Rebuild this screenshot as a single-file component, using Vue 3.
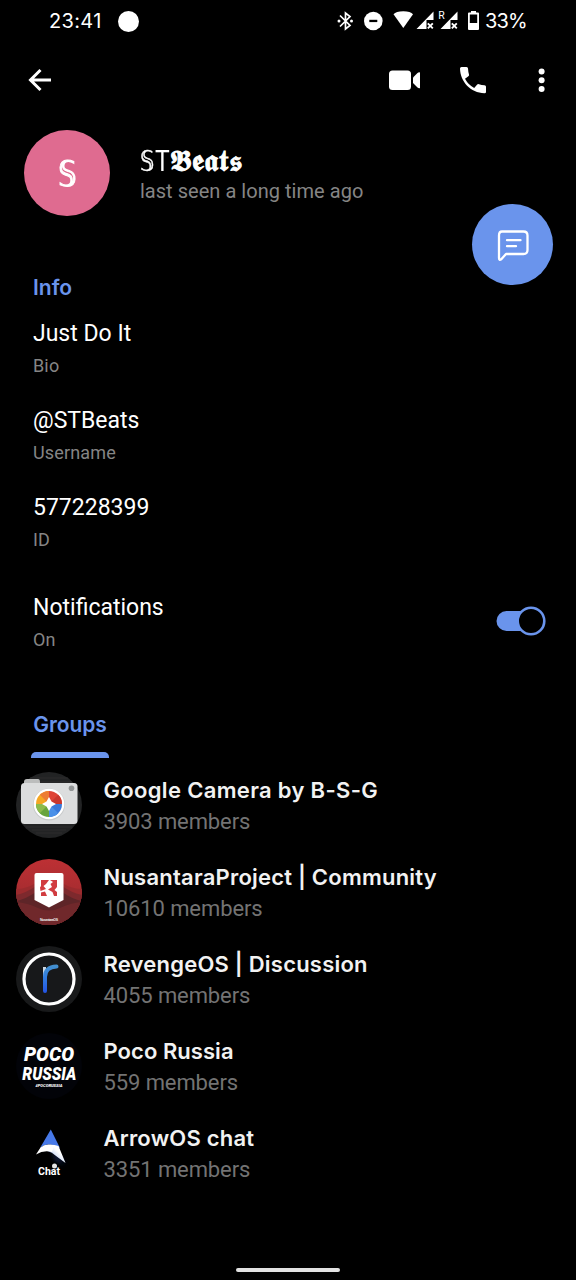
<script setup>
const details = [
  { value: 'Just Do It', label: 'Bio' },
  { value: '@STBeats', label: 'Username' },
  { value: '577228399', label: 'ID' },
]
const groups = [
  { id: 'camera', name: 'Google Camera by B-S-G', members: 3903 },
  { id: 'nusantara', name: 'NusantaraProject | Community', members: 10610 },
  { id: 'revenge', name: 'RevengeOS | Discussion', members: 4055 },
  { id: 'poco', name: 'Poco Russia', members: 559 },
  { id: 'arrow', name: 'ArrowOS chat', members: 3351 },
]
</script>

<template>
  <main class="screen">
    <header class="status">
      <span class="clock">23:41</span>
      <span class="dot"></span>
      <svg class="status-icons" width="146" height="26" viewBox="336 8 146 26" fill="#fff">
        <g fill="none" stroke="#fff" stroke-width="1.7">
          <path d="M340 15.500 350 25.500 345.500 29V13L350 16.500 340 26.500" />
        </g>
        <circle cx="339" cy="21" r="1.5" /><circle cx="351.500" cy="21" r="1.5" />
        <circle cx="373.300" cy="21" r="9.3" />
        <path d="M369.300 19.8h8v2.3h-8z" fill="#000" />
        <path d="M393.500 14.200Q396 11.300 403.300 11.300T413 14.200L403.300 28z" />
        <path d="M433.500 11.500V20H426.500V29H416.500z" />
        <path d="M427.800 23.300l5 5m0-5l-5 5" stroke="#fff" stroke-width="1.900" />
        <path d="M457.500 11.500V20H450.500V29H440.500z" />
        <path d="M451.800 23.300l5 5m0-5l-5 5" stroke="#fff" stroke-width="1.900" />
        <text x="438.300" y="18.600" font-size="10.500" font-family="Roboto, sans-serif">R</text>
        <path fill-rule="evenodd" d="M471 11h5v1.500h2q1 0 1 1V29q0 1-1 1h-9q-1 0-1-1V13.500q0-1 1-1h2zM469.800 14.500V23h7.400V14.500z" />
      </svg>
      <span class="battery">33%</span>
    </header>

    <nav class="toolbar">
      <svg class="back" width="26" height="26" viewBox="0 0 26 26" fill="none" stroke="#fff" stroke-width="3">
        <path d="M13.500 3 3.500 13 13.500 23M3.500 13H24" />
      </svg>
      <svg class="video" width="33" height="24" viewBox="0 0 33 24" fill="#fff">
        <rect x="1" y="2.500" width="22" height="19.500" rx="3.500" />
        <path d="M25 9.500 29.500 5Q31 3.800 32 4.500V20Q31 20.700 29.500 19.500L25 15z" />
      </svg>
      <svg class="phone" width="28" height="28" viewBox="0 0 28 28" fill="#fff">
        <path d="M2.500 1H7.500Q9 1 9 2.500Q9.200 6 10 8.500Q10.300 9.300 9.700 10L6 12.800Q9.200 18.800 15.200 22L18.200 18.500Q19 17.800 20 18.200Q22.500 19 25.500 19.200Q27 19.300 27 20.700V26Q27 27.300 25.500 27.300C11.500 26.700 1.400 16 1 2.500Q1 1 2.500 1Z" />
      </svg>
      <svg class="more" width="8" height="26" viewBox="0 0 8 26" fill="#fff">
        <circle cx="3.600" cy="4.600" r="3" /><circle cx="3.600" cy="13.200" r="3" /><circle cx="3.600" cy="22" r="3" />
      </svg>
    </nav>

    <section class="profile">
      <div class="portrait"><span class="initial">𝕊</span></div>
      <div class="identity">
        <h1><span class="double">𝕊</span><span class="plain">T</span><b>𝕭𝖊𝖆𝖙𝖘</b></h1>
        <p>last seen a long time ago</p>
      </div>
      <button class="message">
        <svg width="34" height="34" viewBox="0 0 34 34" fill="none" stroke="#fff" stroke-width="2.300" stroke-linecap="round" stroke-linejoin="round">
          <path d="M6 3.500H27.500Q31.500 3.500 31.500 7.500V22Q31.500 26 27.500 26H10L5.300 31.200Q3 32.800 3 30V7.500Q3 3.500 6 3.500Z" />
          <path d="M11 12.200H24.500M11 18.200H20" />
        </svg>
      </button>
    </section>

    <section class="info">
      <h2>Info</h2>
      <div v-for="d in details" :key="d.label" class="detail">
        <strong>{{ d.value }}</strong>
        <span>{{ d.label }}</span>
      </div>
    </section>

    <section class="notify">
      <div class="detail">
        <strong>Notifications</strong>
        <span>On</span>
      </div>
      <svg class="switch" width="52" height="30" viewBox="0 0 52 30">
        <rect x="1.500" y="5" width="40" height="20" rx="10" fill="#6a94ec" />
        <circle cx="36" cy="15" r="13.300" fill="#000" stroke="#6a94ec" stroke-width="2.600" />
      </svg>
    </section>

    <section class="groups">
      <div class="tab">Groups</div>
      <div class="indicator"></div>
      <article v-for="g in groups" :key="g.id" class="group">
        <svg class="avatar" width="66" height="66" viewBox="0 0 66 66">
          <template v-if="g.id === 'camera'">
            <circle cx="33" cy="33" r="33" fill="#222324" />
            <path d="M14 6H52M10 10H56M10 55H56M16 58H50M20 61H46" stroke="#303132" stroke-width=".7" />
            <path d="M8 12V10Q8 7 11 7H22Q24 7 24 10V12z" fill="#bcbdbd" />
            <rect x="5" y="11" width="56.500" height="41" rx="3.500" fill="#dcddde" />
            <circle cx="55.500" cy="16.300" r="2.800" fill="#929596" />
            <circle cx="33" cy="32.500" r="16" fill="#c9cbcc" />
            <circle cx="33" cy="32" r="15.300" fill="#fff" />
            <path d="M33 32V19A13 13 0 0 1 46 32Z" fill="#df4336" />
            <path d="M33 32H46A13 13 0 0 1 33 45Z" fill="#3978d8" />
            <path d="M33 32V45A13 13 0 0 1 20 32Z" fill="#68a43d" />
            <path d="M33 32H20A13 13 0 0 1 33 19Z" fill="#f5a623" />
            <path d="M33 32 23.800 22.800A13 13 0 0 1 33 19Z" fill="#ed7c32" />
            <path d="M33 32 42.200 22.800A13 13 0 0 1 46 32Z" fill="#c9372e" />
            <path d="M33 32 42.200 41.200A13 13 0 0 1 33 45Z" fill="#4a90e8" />
            <path d="M33 32 23.800 41.200A13 13 0 0 1 20 32Z" fill="#8dbb4b" />
            <path d="M33 25 35.500 29.500 40 32 35.500 34.500 33 39 30.500 34.500 26 32 30.500 29.500z" fill="#fff" />
          </template>
          <template v-else-if="g.id === 'nusantara'">
            <defs>
              <clipPath id="nus-clip"><circle cx="33" cy="33" r="33" /></clipPath>
              <linearGradient id="nus-sky" x2="0" y2="1"><stop stop-color="#bd3034" /><stop offset="1" stop-color="#93292c" /></linearGradient>
            </defs>
            <g clip-path="url(#nus-clip)">
              <rect width="66" height="66" fill="url(#nus-sky)" />
              <path d="M0 30Q10 30 20 24H46Q56 30 66 30V66H0z" fill="#9b2b2e" />
              <path d="M0 36Q10 34 20 27H46Q56 34 66 36V66H0z" fill="#7d292d" />
              <path d="M0 42Q10 40 20 33H46Q56 40 66 42V66H0z" fill="#5e2528" />
              <path d="M0 43Q12 44 22 49Q33 54 44 49Q54 44 66 43V66H0z" fill="#70282b" />
            </g>
            <path d="M20.500 14H45.500Q47.500 14 47.500 16V41L33 48.500 18.500 41V16Q18.500 14 20.500 14z" fill="#fff" />
            <path d="M25 21H33L30 25 27.500 27 30 30 24.500 32 24 28.500 25 27zM25 33.500 29 32.500 31 37H25zM34 21H41V28L38.500 31 41 33V37H38L36.500 33 32 30.500 36 28 34.500 25 37 23z" fill="#d13c40" />
            <text x="33" y="61.500" text-anchor="middle" font-size="3.500" font-weight="700" fill="#eee" textLength="18" font-family="Liberation Sans, sans-serif">NusantaraOS</text>
          </template>
          <template v-else-if="g.id === 'revenge'">
            <defs><linearGradient id="r-ink" gradientUnits="userSpaceOnUse" x1="33" y1="20" x2="33" y2="47"><stop stop-color="#438fce" /><stop offset=".4" stop-color="#327ee0" /><stop offset="1" stop-color="#2454e5" /></linearGradient></defs>
            <circle cx="33" cy="33" r="33" fill="#18191a" />
            <circle cx="33" cy="33" r="25" fill="#17181a" stroke="#fff" stroke-width="3.200" />
            <path d="M28.500 21V33" fill="none" stroke="#cbd6e2" stroke-width="3" />
            <path d="M29 45V31Q29 21 40.500 20.500" fill="none" stroke="url(#r-ink)" stroke-width="4" stroke-linecap="round" />
          </template>
          <template v-else-if="g.id === 'poco'">
            <circle cx="33" cy="33" r="33" fill="#020308" />
            <g fill="#fff" text-anchor="middle" font-weight="900" font-style="italic" font-family="Roboto, sans-serif">
              <text x="33" y="28" font-size="20.500" textLength="50" lengthAdjust="spacingAndGlyphs">POCO</text>
              <text x="33.300" y="47" font-size="17.500" textLength="54" lengthAdjust="spacingAndGlyphs">RUSSIA</text>
              <text x="33" y="54" font-size="4" textLength="27" lengthAdjust="spacingAndGlyphs">#POCORUSSIA</text>
            </g>
          </template>
          <template v-else>
            <defs>
              <filter id="arrow-glow" x="-50%" y="-50%" width="200%" height="200%"><feGaussianBlur stdDeviation="2.500" /></filter>
              <linearGradient id="arrow-wing" gradientUnits="userSpaceOnUse" x1="36" y1="37" x2="42" y2="31"><stop stop-color="#15295d" /><stop offset=".45" stop-color="#dce6fa" /><stop offset="1" stop-color="#fff" /></linearGradient>
            </defs>
            <path d="M36 31 49 44 40 40z" fill="#1d3474" filter="url(#arrow-glow)" />
            <path d="M34.800 9.500 24 28Q32 21 44 28z" fill="#4779e8" />
            <path d="M24.500 28Q32 22.500 42.500 26L49.500 43 36 33z" fill="url(#arrow-wing)" />
            <path d="M24.500 27.500Q30 23 38 25.500L36 32Q28 29.500 20 34.500z" fill="#fff" />
            <text x="33" y="55" text-anchor="middle" font-size="11" font-weight="700" fill="#fff" textLength="22" lengthAdjust="spacingAndGlyphs" font-family="Roboto, sans-serif">Chat</text>
            <circle cx="38.500" cy="46" r="2.500" fill="#e5e5e5" />
          </template>
        </svg>
        <div class="group-copy">
          <strong :class="g.id">{{ g.name }}</strong>
          <span>{{ g.members }} members</span>
        </div>
      </article>
    </section>
    <div class="home-bar"></div>
  </main>
</template>

<style>
body { background: #000; }
</style>

<style scoped>
.screen { position: relative; width: 576px; height: 1280px; overflow: hidden; background: #000; color: #fff; font-family: Roboto, sans-serif; }
h1, h2, p { margin: 0; font-weight: 400; }
.status { display: flex; align-items: center; height: 42px; padding-left: 49px; font-family: Inter, sans-serif; font-size: 20px; }
.clock { width: 69px; letter-spacing: .35px; }
.dot { width: 21px; height: 21px; border-radius: 50%; background: #fff; }
.status-icons { margin-left: 197px; }
.battery { margin-left: 3px; letter-spacing: -.8px; }
.toolbar { display: flex; align-items: center; height: 76px; padding-left: 27px; }
.video { margin-left: 335px; }
.phone { margin-left: 38px; }
.more { margin-left: 51px; }
.profile { display: flex; height: 158px; padding: 11px 23px 0 24px; box-sizing: border-box; }
.portrait { width: 86px; height: 86px; margin-top: .5px; border-radius: 50%; background: #df6b90; text-align: center; font: 500 36px/87px "DejaVu Sans", sans-serif; -webkit-text-stroke: 1.1px #fff; }
.initial { display: inline-block; transform: scaleX(.82); }
.identity { margin-left: 30px; width: 332.500px; }
h1 { display: flex; align-items: baseline; height: 27px; padding-top: 18px; line-height: 27px; white-space: nowrap; }
h1 b { font-weight: 400; font-size: 30px; letter-spacing: .7px; -webkit-text-stroke: 1px #fff; }
.plain { width: 15px; font-size: 29px; transform: scaleX(.85); transform-origin: left; }
.double { width: 15px; font-family: "DejaVu Sans", sans-serif; font-size: 29px; transform: scaleX(.78); transform-origin: left; -webkit-text-stroke: .5px #fff; }
.identity p { margin-top: 5px; font-size: 20px; line-height: 24px; color: #858585; letter-spacing: .04px; }
.message { display: grid; place-items: center; width: 81px; height: 81px; margin-top: 75px; padding: 0; border: 0; border-radius: 50%; background: #6a94ec; }
.info { height: 311px; padding-left: 33px; box-sizing: border-box; }
h2 { height: 24px; font: 600 21px/24px Inter, sans-serif; color: #6a94ec; }
.detail { display: flex; flex-direction: column; height: 86.700px; }
.info .detail:nth-child(2) { margin-top: 20.200px; }
.detail strong { font-size: 23px; line-height: 28px; font-weight: 400; }
.detail span { margin-top: 7px; font-size: 18px; line-height: 22px; color: #858585; letter-spacing: .15px; }
.notify { display: flex; align-items: flex-start; justify-content: space-between; height: 117px; padding: 6px 29px 0 33px; box-sizing: border-box; }
.notify .detail { margin-top: .500px; }
.notify .switch { margin-top: 13px; }
.groups { padding-top: 7px; }
.tab { width: 78px; height: 41px; margin-left: 31px; text-align: center; font: 600 21px/28px Inter, sans-serif; letter-spacing: -.1px; color: #6a94ec; }
.indicator { width: 78px; height: 6px; margin-left: 31px; border-radius: 5px 5px 0 0; background: #6a94ec; }
.group { display: flex; height: 87px; padding: 14px 0 0 16px; box-sizing: border-box; }
.avatar { flex: none; }
.group-copy { display: flex; flex-direction: column; margin-left: 21.500px; white-space: nowrap; }
.group-copy strong { font: 600 22px/28px Inter, sans-serif; margin-top: 4px; color: #f2f2f2; letter-spacing: .22px; }
.group-copy strong.camera { letter-spacing: .33px; }
.group-copy strong.poco { letter-spacing: .05px; }
.group-copy span { margin-top: 4px; font-size: 22px; line-height: 28px; color: #737373; letter-spacing: -.1px; }
.home-bar { position: absolute; left: 236px; bottom: 8px; width: 104px; height: 4px; border-radius: 2px; background: #e2e2e2; }
</style>
